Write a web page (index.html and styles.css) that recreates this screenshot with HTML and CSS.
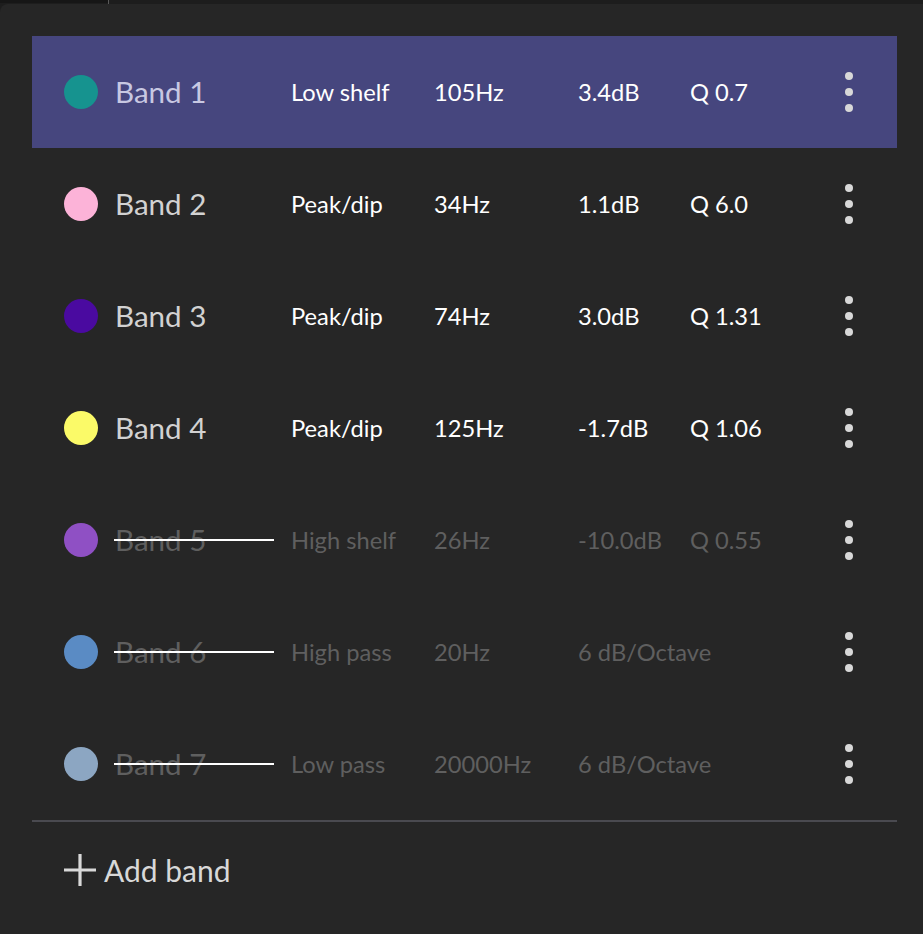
FILE: index.html
```html
<!DOCTYPE html>
<html>
<head>
<meta charset="utf-8">
<link rel="stylesheet" href="styles.css">
</head>
<body>
<div class="topbar">
  <div class="tab"></div>
  <div class="tab-sep"></div>
</div>
<div class="panel">
  <div class="list">
    <div class="row selected">
      <span class="dot" style="background:#16938f"></span>
      <span class="name">Band 1</span>
      <span class="val">Low shelf</span>
      <span class="val">105Hz</span>
      <span class="val">3.4dB</span>
      <span class="val">Q 0.7</span>
      <span class="menu"><i></i><i></i><i></i></span>
    </div>
    <div class="row">
      <span class="dot" style="background:#fcb3d8"></span>
      <span class="name">Band 2</span>
      <span class="val">Peak/dip</span>
      <span class="val">34Hz</span>
      <span class="val">1.1dB</span>
      <span class="val">Q 6.0</span>
      <span class="menu"><i></i><i></i><i></i></span>
    </div>
    <div class="row">
      <span class="dot" style="background:#4a0aa0"></span>
      <span class="name">Band 3</span>
      <span class="val">Peak/dip</span>
      <span class="val">74Hz</span>
      <span class="val">3.0dB</span>
      <span class="val">Q 1.31</span>
      <span class="menu"><i></i><i></i><i></i></span>
    </div>
    <div class="row">
      <span class="dot" style="background:#fbfa68"></span>
      <span class="name">Band 4</span>
      <span class="val">Peak/dip</span>
      <span class="val">125Hz</span>
      <span class="val">-1.7dB</span>
      <span class="val">Q 1.06</span>
      <span class="menu"><i></i><i></i><i></i></span>
    </div>
    <div class="row off">
      <span class="dot" style="background:#8f50c4"></span>
      <span class="name">Band 5</span>
      <span class="val">High shelf</span>
      <span class="val">26Hz</span>
      <span class="val">-10.0dB</span>
      <span class="val">Q 0.55</span>
      <span class="menu"><i></i><i></i><i></i></span>
    </div>
    <div class="row off">
      <span class="dot" style="background:#5a8bc4"></span>
      <span class="name">Band 6</span>
      <span class="val">High pass</span>
      <span class="val">20Hz</span>
      <span class="val wide">6 dB/Octave</span>
      <span class="menu"><i></i><i></i><i></i></span>
    </div>
    <div class="row off">
      <span class="dot" style="background:#8ca6c2"></span>
      <span class="name">Band 7</span>
      <span class="val">Low pass</span>
      <span class="val">20000Hz</span>
      <span class="val wide">6 dB/Octave</span>
      <span class="menu"><i></i><i></i><i></i></span>
    </div>
  </div>
  <div class="add">
    <svg class="plus" width="32" height="32" viewBox="0 0 32 32"><path d="M16 0.5V31.5M0.5 16H31.5" stroke="#d9d9d9" stroke-width="3.2" stroke-linecap="round" fill="none"/></svg>
    <span class="add-label">Add band</span>
  </div>
</div>
</body>
</html>
```
FILE: styles.css
```css
* { box-sizing: border-box; }
html, body { margin: 0; padding: 0; }
body {
  background: #1d1d1d;
  font-family: Lato, "Open Sans", sans-serif;
  width: 923px;
  height: 934px;
  overflow: hidden;
}
.topbar {
  height: 4px;
  display: flex;
}
.tab {
  width: 108px;
  height: 3px;
  background: #161616;
}
.tab-sep {
  width: 1px;
  height: 4px;
  background: #5a5a5a;
}
.panel {
  background: #262626;
  border-top-left-radius: 8px;
  height: 930px;
  padding: 32px 26px 0 32px;
}
.list {
  border-bottom: 2px solid #4a4a50;
}
.row {
  height: 112px;
  display: grid;
  grid-template-columns: 51px 176px 143px 144px 112px 1fr 8px;
  align-items: center;
  padding: 0 44px 0 32px;
}
.row.selected { background: #46467e; }
.dot {
  width: 34px;
  height: 34px;
  border-radius: 50%;
}
.name {
  font-size: 29.6px;
  color: #d2d2d2;
  position: relative;
  line-height: 1;
}
.selected .name { color: #c8c8e2; }
.val {
  font-size: 23.7px;
  color: #ffffff;
  line-height: 1;
  padding-top: 2px;
}
.val.wide { grid-column: span 2; }
.off .name, .off .val { color: #5f5f5f; }
.off .name::after {
  content: "";
  position: absolute;
  left: -1px;
  top: 50%;
  width: 160px;
  height: 2px;
  margin-top: -1px;
  background: #ffffff;
}
.menu {
  display: flex;
  flex-direction: column;
  gap: 8px;
  grid-column: 7;
}
.menu i {
  width: 8px;
  height: 8px;
  border-radius: 50%;
  background: #d8d8d8;
}
.add {
  height: 96px;
  display: flex;
  align-items: center;
  padding-left: 32px;
  gap: 8px;
}
.plus { display: block; }
.add-label {
  font-size: 30px;
  color: #d8d8d8;
  line-height: 1;
}
```
